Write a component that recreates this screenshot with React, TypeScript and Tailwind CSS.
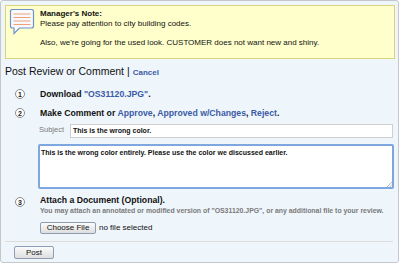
import React from "react";

function Num({ n }: { n: number }) {
  return (
    <div className="w-[10px] h-[10px] rounded-full border border-[#8c8c8c] bg-white flex items-center justify-center text-[7px] font-bold text-[#222] leading-none shrink-0">
      {n}
    </div>
  );
}

const link = "text-[#3b5ba5]";

export default function App() {
  return (
    <div
      className="w-[400px] h-[264px] bg-white"
      style={{ fontFamily: '"Liberation Sans", Arial, sans-serif' }}
    >
      <div className="w-[399px] h-[263px] border border-[#c4c8cc] rounded-[3px] bg-[#eef5fb] flex flex-col pl-[4px] pr-[3px] pt-[4px]">
        <div className="h-[54px] border border-[#d9d27e] bg-[#ffffcc] flex pl-[3px] pt-[3px]">
          <svg width="26" height="27" viewBox="0 0 26 27" className="shrink-0">
            <path
              d="M1.5 2.5 Q1.5 0.5 3.5 0.5 H22.5 Q24.5 0.5 24.5 2.5 V17 Q24.5 19 22.5 19 H10.5 L5 24.5 V19 H3.5 Q1.5 19 1.5 17 Z"
              fill="#f7f9fd"
              stroke="#6f93c9"
              strokeWidth="1.2"
            />
            <line x1="4.5" y1="5" x2="21.5" y2="5" stroke="#f2a07a" strokeWidth="1" />
            <line x1="4.5" y1="8.5" x2="21.5" y2="8.5" stroke="#f2a07a" strokeWidth="1" />
            <line x1="4.5" y1="12" x2="21.5" y2="12" stroke="#f2a07a" strokeWidth="1" />
            <line x1="4.5" y1="15.5" x2="21.5" y2="15.5" stroke="#f2a07a" strokeWidth="1" />
          </svg>
          <div className="pl-[5px] pt-[0px] text-[8px] leading-[10px] text-[#111]">
            <div className="font-bold">Manager's Note:</div>
            <div>Please pay attention to city building codes.</div>
            <div className="mt-[9px]">Also, we're going for the used look. CUSTOMER does not want new and shiny.</div>
          </div>
        </div>

        <div className="mt-[6px] flex items-baseline text-[10.5px] text-[#111] leading-[12px]">
          <span>Post Review or Comment |</span>
          <span className={`ml-[3px] text-[8px] font-bold ${link}`}>Cancel</span>
        </div>

        <div className="mt-[9px] h-[12px] flex items-center pl-[10px] gap-[15px]">
          <Num n={1} />
          <div className="text-[8.7px] font-bold text-[#111] leading-[12px]">
            Download <span className={link}>"OS31120.JPG"</span>.
          </div>
        </div>

        <div className="mt-[7px] h-[12px] flex items-center pl-[10px] gap-[15px]">
          <Num n={2} />
          <div className="text-[8.7px] font-bold text-[#111] leading-[12px]">
            Make Comment or <span className={link}>Approve</span>,{" "}
            <span className={link}>Approved w/Changes</span>,{" "}
            <span className={link}>Reject</span>.
          </div>
        </div>

        <div className="mt-[5px] flex items-center pl-[34px]">
          <span className="text-[7.5px] text-[#7a7a7a] w-[31px] leading-[10px] -mt-[2px]">Subject</span>
          <div className="flex-1 mr-[2px] h-[14px] border border-[#cfcfcf] bg-white flex items-center pl-[2px] text-[7px] font-bold text-[#111]">
            This is the wrong color.
          </div>
        </div>

        <div className="mt-[6px] ml-[33px] mr-[1px] h-[45px] border-2 border-[#7ea6df] rounded-[2px] bg-white pl-[1px] pt-[2px] text-[7px] leading-[9px] font-bold text-[#111] relative">
          This is the wrong color entirely. Please use the color we discussed earlier.
          <svg width="6" height="6" className="absolute right-0 bottom-0" viewBox="0 0 6 6">
            <line x1="1" y1="6" x2="6" y2="1" stroke="#999" strokeWidth="0.7" />
            <line x1="3.5" y1="6" x2="6" y2="3.5" stroke="#999" strokeWidth="0.7" />
          </svg>
        </div>

        <div className="mt-[5px] flex pl-[10px] gap-[15px]">
          <div className="pt-[3px]">
            <Num n={3} />
          </div>
          <div className="flex flex-col">
            <div className="text-[8.7px] font-bold text-[#111] leading-[12px]">Attach a Document (Optional).</div>
            <div className="text-[6.9px] font-bold text-[#7a7a7a] leading-[10px]">
              You may attach an annotated or modified version of "OS31120.JPG", or any additional file to your review.
            </div>
            <div className="mt-[6px] flex items-center">
              <div className="h-[12px] w-[56px] border border-[#8e9db3] rounded-[2px] bg-gradient-to-b from-[#fbfbfb] to-[#dedede] text-[8px] text-[#111] flex items-center justify-center">
                Choose File
              </div>
              <span className="ml-[3px] text-[8px] text-[#111]">no file selected</span>
            </div>
          </div>
        </div>

        <div className="mt-[7px] mr-[2px] h-[1px] bg-[#dcdcdc]" />

        <div className="mt-[4px] ml-[9px]">
          <div className="w-[40px] h-[13px] border border-[#8e9db3] rounded-[2px] bg-gradient-to-b from-[#fbfbfb] to-[#dedede] text-[8px] text-[#111] flex items-center justify-center">
            Post
          </div>
        </div>
      </div>
    </div>
  );
}
